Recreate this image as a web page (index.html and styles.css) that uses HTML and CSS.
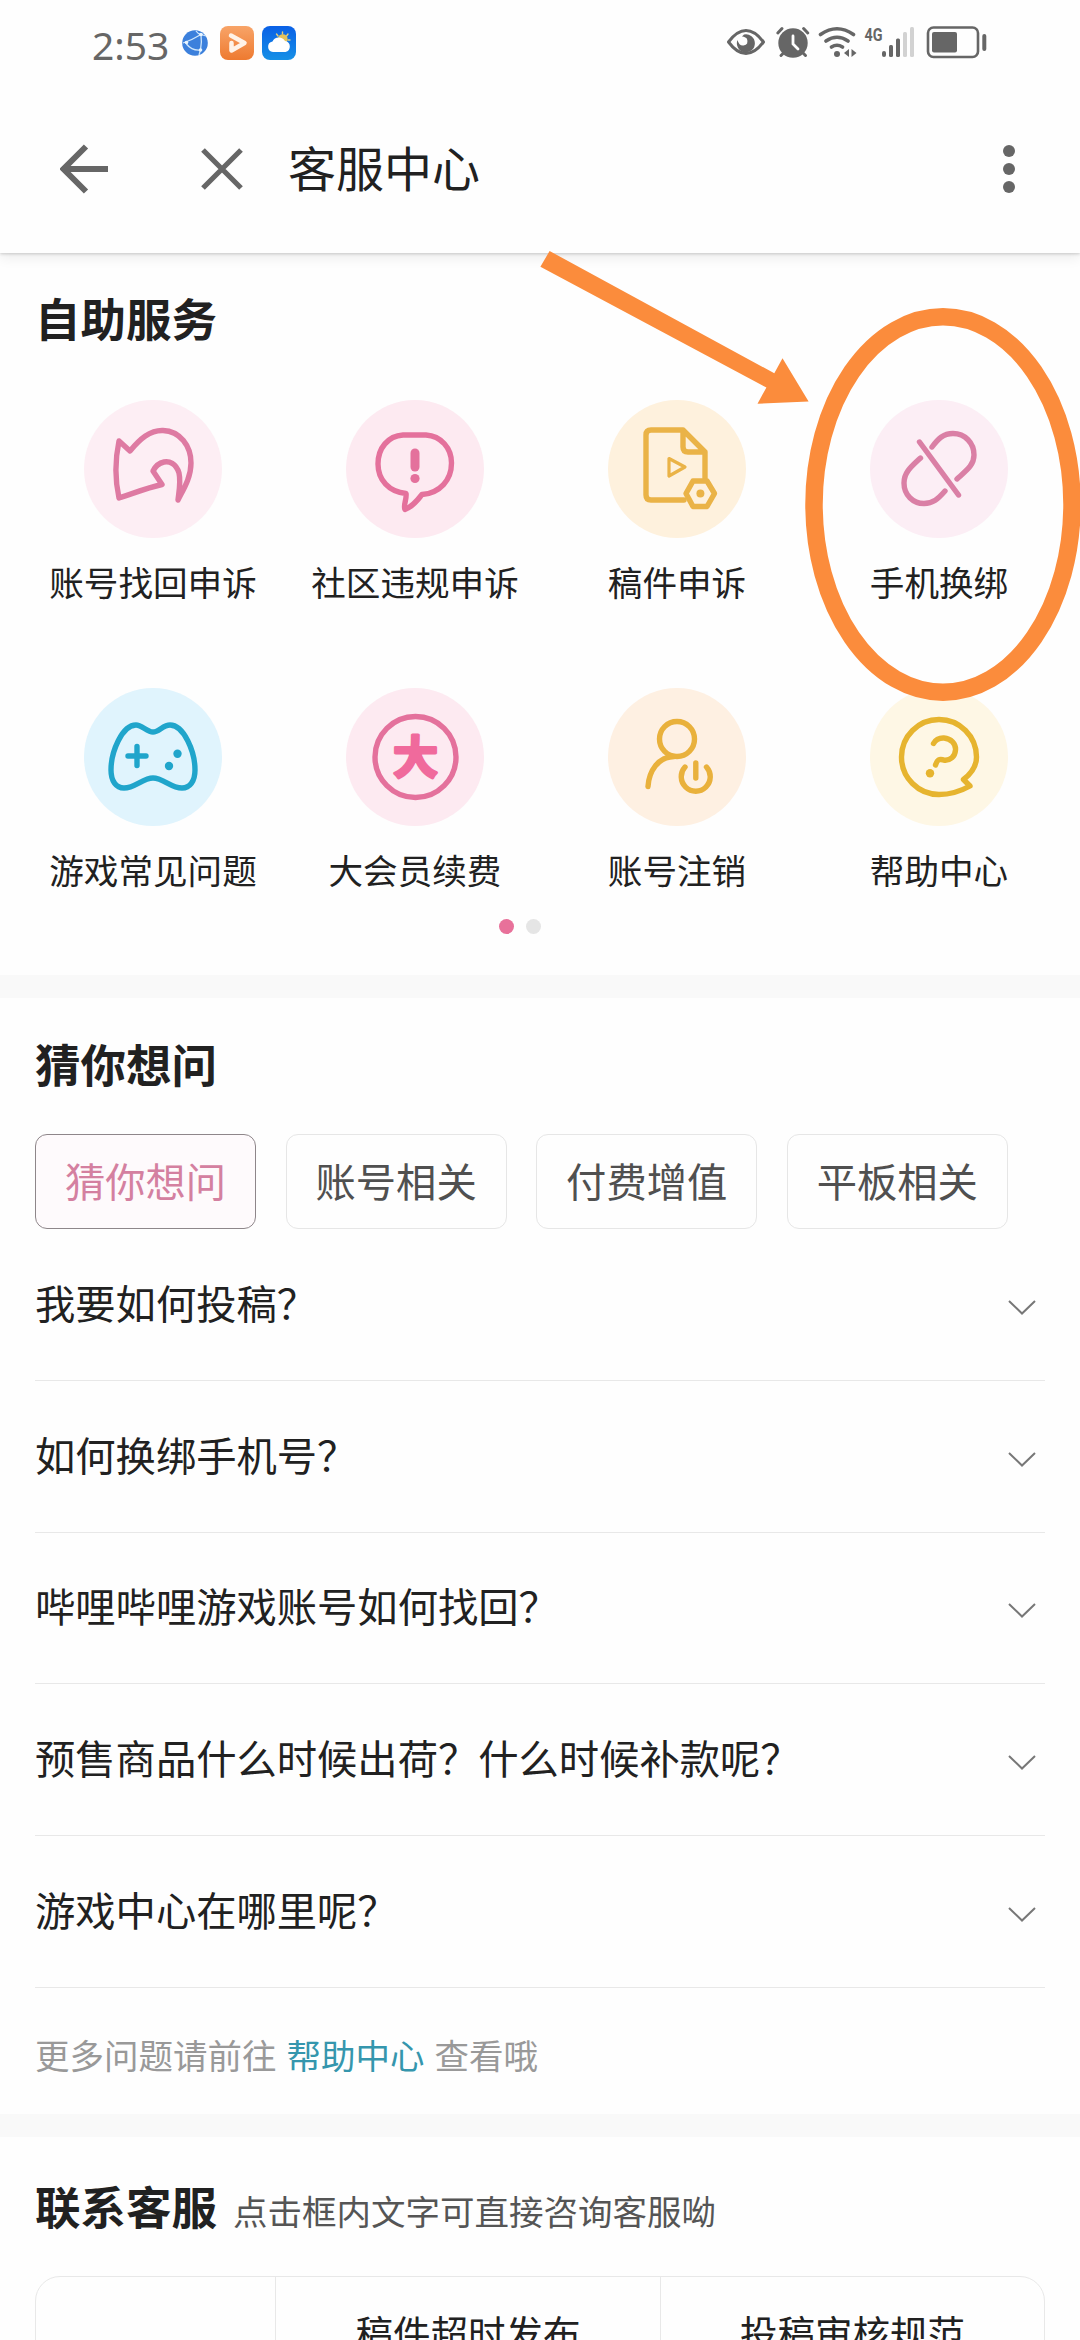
FILE: index.html
```html
<!DOCTYPE html>
<html lang="zh-CN">
<head>
<meta charset="utf-8">
<title>客服中心</title>
<link rel="stylesheet" href="styles.css">
</head>
<body>
<div class="screen">
  <header class="top">
    <div class="status">
      <span class="time">2:53</span>
      <svg class="status-apps" width="116" height="40" viewBox="180 23 116 40">
        <defs>
          <linearGradient id="orange" x1="0" y1="0" x2="0" y2="1"><stop offset="0" stop-color="#f8a468"/><stop offset="1" stop-color="#ee7a30"/></linearGradient>
          <linearGradient id="sky" x1="0" y1="0" x2="0" y2="1"><stop offset="0" stop-color="#0a60e6"/><stop offset="1" stop-color="#1690e6"/></linearGradient>
        </defs>
        <circle cx="195" cy="43" r="12.8" fill="#3c80dc"/>
        <g fill="none" stroke="#cfe6fb" stroke-width="1.3"><path d="M183 43Q192 40 201 34.500M186.500 44Q192 51 200.500 50M196 31Q198 34 201 34.500Q202 42 200.500 50L199 55M201 34.500L206 36"/></g>
        <g fill="#e9f5ff"><circle cx="186.500" cy="42.500" r="1.800"/><circle cx="201" cy="34.500" r="1.800"/><circle cx="200.500" cy="50" r="1.800"/></g>
        <rect x="220" y="26" width="34" height="34" rx="8" fill="url(#orange)"/>
        <path d="M231 35.500L244.500 43L231.500 50.500V43" fill="none" stroke="#fff3e8" stroke-width="4.500" stroke-linejoin="round" stroke-linecap="round"/>
        <rect x="262" y="26" width="34" height="34" rx="8" fill="url(#sky)"/>
        <g stroke="#e3cd7c" stroke-width="1.400" stroke-linecap="round"><path d="M282.500 32V34M276.500 34L278 36M288 34L286.500 36M290 40H288M288.500 45L287.500 44"/></g>
        <circle cx="282.800" cy="39" r="4.800" fill="#e5c35b"/>
        <path d="M273 52a5.300 5.300 0 0 1-.5-10.500a7 7 0 0 1 12.500-.5a5.600 5.600 0 0 1 .5 11z" fill="#fff"/>
      </svg>
      <svg class="status-icons" width="262" height="40" viewBox="726 23 262 40">
        <g fill="none" stroke="#666" stroke-width="3">
          <path d="M728.500 42Q737 30.500 746 30.500T763.500 42Q755 53.500 746 53.500T728.500 42Z" stroke-linejoin="round"/>
          <path d="M820.500 34.500Q837 23 853.500 34.500M826 41Q837 33.500 848 41M831.500 47Q837 43.500 842.500 47" stroke-width="3.600" stroke-linecap="round"/>
          <path d="M777.800 33L782 28.500M807.800 33L803.600 28.500M781 55.500L784.500 52M805.500 55.500L802 52" stroke-linecap="round"/>
          <rect x="928" y="27.500" width="50" height="29.500" rx="5.500" stroke-width="2.600"/>
        </g>
        <g fill="#666">
          <path d="M744 34.500A9 9 0 1 1 737.500 40Q739 46 743.500 45.500Q749 44.500 747 39Q746 37 742 36.500Z"/>
          <circle cx="793" cy="43" r="14.700"/>
          <circle cx="837" cy="54" r="3"/>
          <path d="M844 53L849 49V57ZM856.500 53L851.500 49V57Z"/>
          <rect x="882" y="51" width="4" height="6" rx="2"/><rect x="889" y="45" width="4" height="12" rx="1.500"/><rect x="896" y="38.500" width="4" height="18.500" rx="1.500"/>
          <rect x="932" y="32" width="25" height="20.500" rx="2"/>
          <rect x="982.300" y="34" width="4" height="17" rx="2"/>
        </g>
        <g fill="#d2d2d2"><rect x="903" y="32" width="4" height="25" rx="1.500"/><rect x="910" y="27" width="4" height="30" rx="1.500"/></g>
        <path d="M793 36V44L798 49" fill="none" stroke="#fff" stroke-width="2.800" stroke-linecap="round"/>
        <text class="net" x="864.500" y="41" textLength="18" lengthAdjust="spacingAndGlyphs">4G</text>
      </svg>
    </div>
    <div class="appbar">
      <svg width="48" height="50" viewBox="0 0 48 50"><path d="M26 2.500L3.500 25L26 47.500M3.500 25H48" fill="none" stroke="#666" stroke-width="6"/></svg>
      <svg class="close" width="42" height="42" viewBox="0 0 42 42"><path d="M2 2L40 40M40 2L2 40" stroke="#666" stroke-width="5.200"/></svg>
      <h1>客服中心</h1>
      <svg class="more" width="12" height="50" viewBox="0 0 12 50" fill="#666"><circle cx="6" cy="7" r="6"/><circle cx="6" cy="25" r="6"/><circle cx="6" cy="43" r="6"/></svg>
    </div>
  </header>

  <section class="services">
    <h2>自助服务</h2>
    <div class="grid">
      <div class="item"><svg class="disc rose-light" viewBox="0 0 138 138"><path d="M35 41L46 51C56 39 66 30 79 30.500C96 31 107 46 107 63C107 78 99 90 94 100C95 91 97 82 95 73C92 63 85 61 80 62C75 63 71 67 69 71L78 84.500C62 88 48 94 35 98C31 80 31 60 35 41Z"/></svg><span>账号找回申诉</span></div>
      <div class="item"><svg class="disc rose" viewBox="0 0 138 138"><path d="M57 35H80C95 36 105.500 48 105.500 63C105.500 80 94 93 76 94.500C71 101 66 107 59 109.500C57 105 61 99 60 93.500C43 92 32 80 32 64C32 48 42 36 57 35Z"/><path d="M69 53V67" stroke-width="9"/><circle class="dot" cx="69" cy="78.500" r="4.600"/></svg><span>社区违规申诉</span></div>
      <div class="item"><svg class="disc cream" viewBox="0 0 138 138"><path d="M76 100H43Q38 100 38 95V35Q38 30 43 30H75L97 52V78M75 30V47Q75 52 80 52H97"/><path d="M61 58.500L77 67L61 76Z" stroke-width="3.200"/><path d="M85 81H99L106.500 93.500L99 106.500H85L78 93.500Z"/><circle class="dot" cx="92.400" cy="93.500" r="4"/></svg><span>稿件申诉</span></div>
      <div class="item"><svg class="disc blush" viewBox="0 0 138 138"><path d="M49.500 42L88.500 95M62 47C68 39 73 33.500 83 33.500C95 33.500 104 43 104 55C104 65 97 70 87 79M50.500 58C42 66 34 72 34 83C34 95 43 103.500 54 103.500C63 103.500 68 99 75 91"/></svg><span>手机换绑</span></div>
      <div class="item"><svg class="disc blue" viewBox="0 0 138 138"><path d="M69 44C63 44 58 37 52 37C38 37 27 64 27 82C27 93 32 100 40 100C51 100 59 90 69 90C79 90 87 100 98 100C106 100 111 93 111 82C111 64 100 37 86 37C79 37 75 44 69 44Z"/><path d="M44 68H62M53 58.500V77.500"/><circle class="dot" cx="93.500" cy="65.700" r="4.200"/><circle class="dot" cx="85" cy="78" r="4.200"/></svg><span>游戏常见问题</span></div>
      <div class="item"><svg class="disc rose" viewBox="0 0 138 138"><circle cx="69.500" cy="69" r="40.500"/><text class="vip" x="69.500" y="86">大</text></svg><span>大会员续费</span></div>
      <div class="item"><svg class="disc peach" viewBox="0 0 138 138"><circle cx="69" cy="51" r="17.500"/><path d="M66 68.500C50 69 41 83 40 98.500"/><path d="M77 79A14.500 14.500 0 1 0 98.500 79M87.800 75V90"/></svg><span>账号注销</span></div>
      <div class="item"><svg class="disc lemon" viewBox="0 0 138 138"><path d="M100 98L93.500 91.500C102 85 106.500 78 106.500 69A37.500 37.500 0 1 0 69 106.500C81 106.500 91 103 100 98Z"/><path d="M63.500 55.500C66 51 70 49.800 74 50C81 50.500 86 56 85.500 62C85 69 80 72.500 75 72.300C69 70.500 67.500 71.500 65.500 77"/><circle class="dot" cx="60" cy="85.300" r="4.200"/></svg><span>帮助中心</span></div>
    </div>
    <div class="pager"><i class="on"></i><i></i></div>
  </section>

  <section class="faq">
    <h2>猜你想问</h2>
    <div class="tabs">
      <span class="tab active">猜你想问</span><span class="tab">账号相关</span><span class="tab">付费增值</span><span class="tab">平板相关</span>
    </div>
    <ul>
      <li>我要如何投稿？<svg class="chev" viewBox="0 0 28 15"><path d="M1 1L14 13.500L27 1"/></svg></li>
      <li>如何换绑手机号？<svg class="chev" viewBox="0 0 28 15"><path d="M1 1L14 13.500L27 1"/></svg></li>
      <li>哔哩哔哩游戏账号如何找回？<svg class="chev" viewBox="0 0 28 15"><path d="M1 1L14 13.500L27 1"/></svg></li>
      <li>预售商品什么时候出荷？什么时候补款呢？<svg class="chev" viewBox="0 0 28 15"><path d="M1 1L14 13.500L27 1"/></svg></li>
      <li>游戏中心在哪里呢？<svg class="chev" viewBox="0 0 28 15"><path d="M1 1L14 13.500L27 1"/></svg></li>
    </ul>
    <p class="hint"><span>更多问题请前往</span><a>帮助中心</a><span>查看哦</span></p>
  </section>

  <section class="contact">
    <div class="contact-head"><h2>联系客服</h2><span>点击框内文字可直接咨询客服呦</span></div>
    <div class="table"><div></div><div>稿件超时发布</div><div>投稿审核规范</div></div>
  </section>

  <svg class="callout" width="540" height="470" viewBox="540 240 540 470" fill="#fb8c3c">
    <path d="M549.600 251L774.300 373.300L782.500 358.300L808.600 401.500L757.500 403.700L766.400 387.500L540.400 266.700Z"/>
    <ellipse cx="943" cy="504.500" rx="129" ry="187.700" fill="none" stroke="#fb8c3c" stroke-width="17.500"/>
  </svg>
</div>
</body>
</html>
```

FILE: styles.css
```css
* { box-sizing: border-box; margin: 0; padding: 0; }
body { background: #fdfdfd; font-family: "Noto Sans CJK SC", sans-serif; color: #212121; }
svg { display: block; flex: none; }
.screen { position: relative; width: 1080px; height: 2340px; overflow: hidden; background: #fefefe; }

.top { position: relative; height: 253px; background: #fefefe; box-shadow: 0 1px 3px rgba(0,0,0,.18), 0 5px 12px rgba(0,0,0,.07); }
.status { height: 86px; display: flex; align-items: center; padding: 0 92px; }
.time { width: 88px; font: 39px/40px "Noto Sans", sans-serif; color: #666; padding-top: 3px; white-space: nowrap; }
.status-icons { margin-left: auto; }
.net { font: 700 19px "Roboto", sans-serif; fill: #666; }
.appbar { height: 167px; display: flex; align-items: flex-start; padding: 58px 65px 0 60px; }
.close { margin: 4px 0 0 93px; }
h1 { font-size: 48px; font-weight: 400; line-height: 48px; margin: -2px 0 0 45px; }
.more { margin-left: auto; }

h2 { font-size: 45.5px; font-weight: 700; line-height: 46px; }
.services { height: 745px; border-bottom: 23px solid #f9f9f9; padding-top: 41px; }
.services h2 { padding-left: 35px; }
.grid { display: grid; grid-template-columns: repeat(4, 262px); grid-auto-rows: 287.5px; padding: 60px 0 0 22px; }
.item { display: flex; flex-direction: column; align-items: center; gap: 22px; font-size: 34.6px; line-height: 42px; }
.disc { width: 138px; height: 138px; border-radius: 50%; fill: none; stroke: var(--ink); stroke-width: 5.4; stroke-linecap: round; stroke-linejoin: round; }
.disc .dot { fill: var(--ink); stroke: none; }
.rose { --ink: #e4719c; background: #fdeaf1; }
.rose-light { --ink: #de7aa2; background: #fdeef4; }
.blush { --ink: #da7fa5; background: #fceef5; }
.cream { --ink: #eab347; background: #fef1dd; }
.peach { --ink: #e9b13c; background: #fef0e2; }
.lemon { --ink: #e6b42f; background: #fef7e5; }
.blue { --ink: #20a5cb; background: #e0f4fd; }
.vip { font-size: 45px; font-weight: 700; text-anchor: middle; fill: #f06a9c; stroke: #f06a9c; stroke-width: 3; }
.pager { display: flex; justify-content: center; gap: 12px; margin-top: -56px; padding-right: 41px; }
.pager i { width: 15px; height: 15px; border-radius: 50%; background: #e5e5e5; }
.pager .on { background: #e8719a; }

.faq { height: 1139px; border-bottom: 23px solid #f9f9f9; padding: 42px 35px 0; }
.tabs { display: flex; gap: 29.6px; margin-top: 48px; }
.tab { width: 221px; height: 95px; border: 1px solid #e6e6e6; border-radius: 12px; font-size: 40.3px; line-height: 89px; text-align: center; color: #505050; }
.tab.active { color: #d480a0; background: #fefafc; border-color: #8e868a; }
ul { list-style: none; }
li { height: 151.8px; border-bottom: 1.5px solid #e8e8e8; display: flex; align-items: center; justify-content: space-between; padding: 0 9px 5px 0; font-size: 40.3px; line-height: 50px; }
.chev { width: 28px; height: 15px; margin-top: 11px; fill: none; stroke: #777; stroke-width: 2; }
.hint { display: flex; gap: 10px; margin-top: 44px; font-size: 34.5px; line-height: 44px; color: #999; }
.hint a { color: #3596ad; }

.contact { padding: 45px 35px 0; }
.contact-head { display: flex; align-items: baseline; gap: 16px; height: 94px; }
.contact-head span { font-size: 34.5px; line-height: 46px; color: #555; }
.table { display: grid; grid-template-columns: 239px 385px 1fr; height: 200px; border: 1.5px solid #e8e8e8; border-radius: 25px; }
.table div { text-align: center; font-size: 37.5px; line-height: 110px; }
.table div + div { border-left: 1.5px solid #e8e8e8; }

.callout { position: absolute; left: 540px; top: 240px; }
```
